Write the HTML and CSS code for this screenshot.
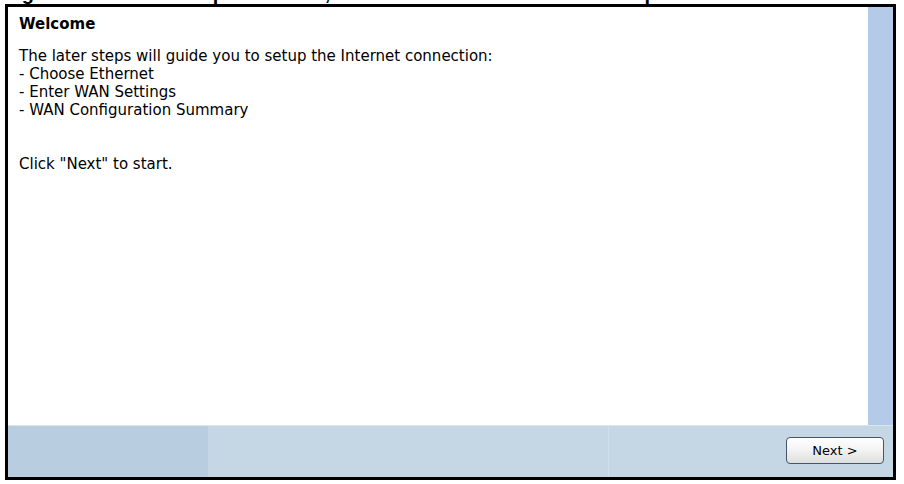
FILE: index.html
```html
<!DOCTYPE html>
<html lang="en">
<head>
<meta charset="utf-8">
<title>Welcome</title>
<link rel="stylesheet" href="styles.css">
</head>
<body>
<div class="caption"><span>Figure 49 Wizard Setup: Welcome, Internet Connection Wizard Setup</span></div>
<div class="panel">
  <div class="main">
    <div class="content">
      <div class="title">Welcome</div>
      <div class="body">
        <p>The later steps will guide you to setup the Internet connection:<br>- Choose Ethernet<br>- Enter WAN Settings<br>- WAN Configuration Summary</p>
        <p>Click "Next" to start.</p>
      </div>
    </div>
    <div class="strip"></div>
  </div>
  <div class="footer">
    <div class="seg seg-left"></div>
    <div class="seg seg-mid"></div>
    <div class="seg seg-right"><button class="btn" type="button">Next &gt;</button></div>
  </div>
</div>
</body>
</html>
```
FILE: styles.css
```css
html, body {
  margin: 0;
  padding: 0;
  background: #ffffff;
}
body {
  width: 904px;
  height: 484px;
  overflow: hidden;
  font-family: "DejaVu Sans", "Liberation Sans", sans-serif;
  color: #000;
}
.caption {
  height: 4px;
  overflow: hidden;
  display: flex;
  align-items: flex-end;
  padding-left: 4px;
}
.caption span {
  font-family: "Liberation Sans", Arial, sans-serif;
  font-weight: bold;
  font-size: 20px;
  line-height: 22px;
  white-space: nowrap;
}
.panel {
  margin: 0 8px 0 5px;
  height: 476px;
  box-sizing: border-box;
  border: 3px solid #000;
  display: flex;
  flex-direction: column;
}
.main {
  flex: 1;
  display: flex;
  min-height: 0;
}
.content {
  flex: 1;
  padding: 8px 10px 0 11px;
  font-size: 15px;
  line-height: 18px;
}
.title {
  font-weight: bold;
}
.body {
  margin-top: 14px;
}
.body p {
  margin: 0 0 36px 0;
}
.strip {
  width: 25px;
  background: #b3cbe9;
}
.footer {
  height: 52px;
  display: flex;
  border-top: 1px solid #dbe5ee;
  box-sizing: border-box;
}
.seg {
  height: 100%;
  box-sizing: border-box;
}
.seg-left {
  width: 200px;
  background: #b9cde1;
}
.seg-mid {
  width: 400px;
  background: #c5d7e5;
}
.seg-right {
  flex: 1;
  background: #c5d7e5;
  border-left: 1px solid #cfdfea;
  display: flex;
  justify-content: flex-end;
  align-items: flex-start;
  padding: 11px 9px 0 0;
}
.btn {
  width: 98px;
  height: 27px;
  border: 1px solid #45566a;
  border-radius: 4px;
  background: linear-gradient(#ffffff 0%, #f4f4f4 45%, #dedede 100%);
  font-family: "DejaVu Sans", "Liberation Sans", sans-serif;
  font-size: 13px;
  color: #000;
  padding: 0;
}
```
